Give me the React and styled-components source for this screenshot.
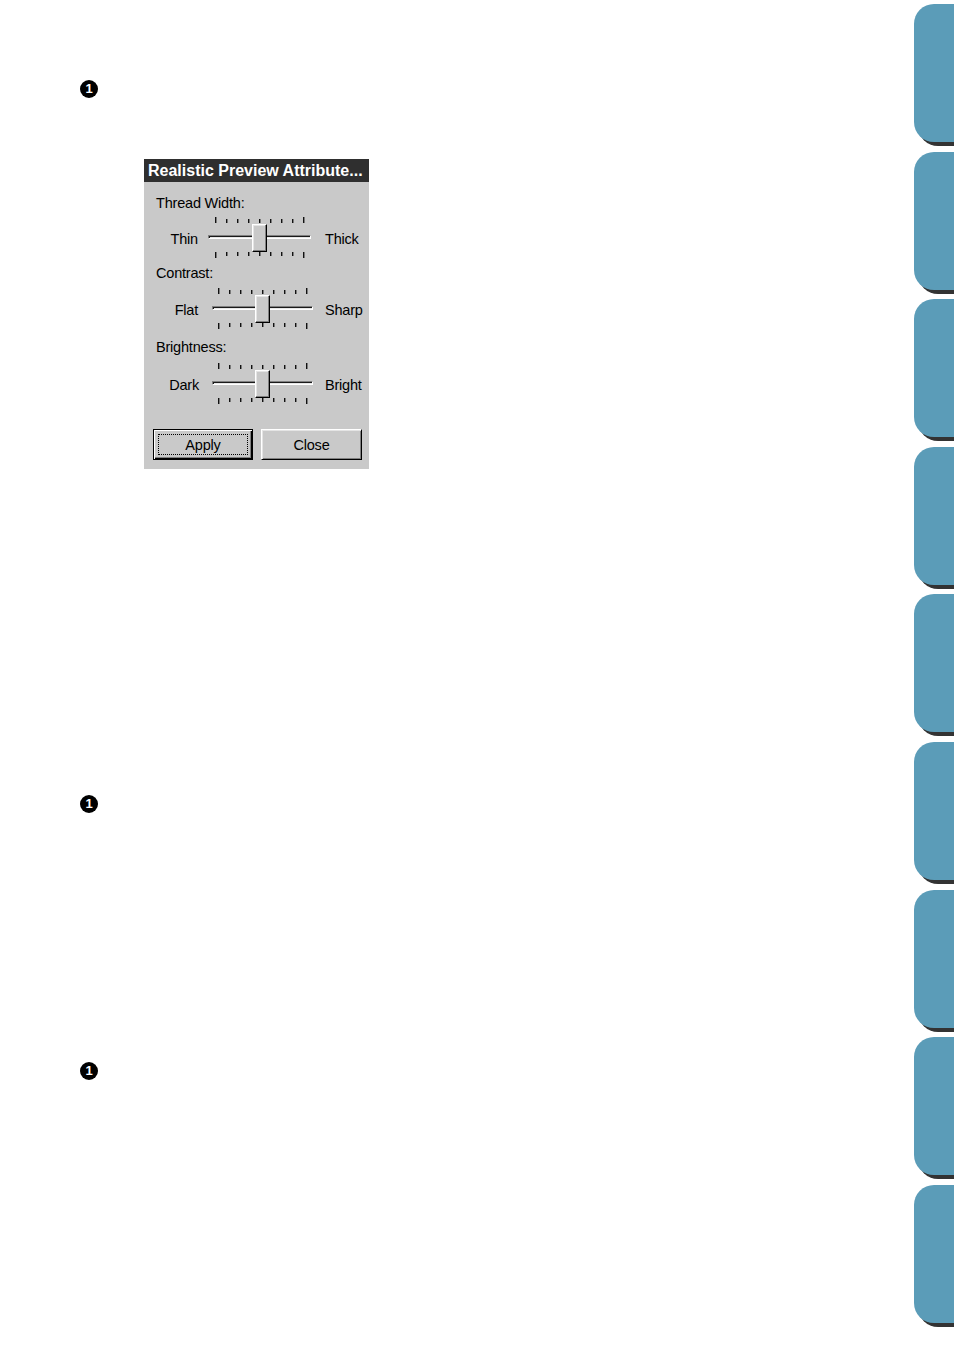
import styled, { createGlobalStyle } from 'styled-components';

const GlobalStyle = createGlobalStyle`
  html, body {
    margin: 0;
    padding: 0;
    background: #fff;
  }
  body {
    font-family: "Liberation Sans", Arial, sans-serif;
  }
`;

const Page = styled.div`
  display: flex;
  width: 954px;
  height: 1348px;
  overflow: hidden;
  background: #fff;
`;

const Main = styled.main`
  flex: 1;
  display: flex;
  flex-direction: column;
  align-items: flex-start;
  padding-left: 80px;
`;

const Marker = styled.div`
  width: 18px;
  height: 18px;
  margin-top: ${(p) => p.top}px;
  border-radius: 50%;
  background: #000;
  color: #fff;
  font: bold 13px/18px "Liberation Sans", Arial, sans-serif;
  text-align: center;
`;

const Dialog = styled.div`
  width: 225px;
  height: 310px;
  margin-top: 61px;
  margin-left: 64px;
  background: #c9c9c9;
  display: flex;
  flex-direction: column;
`;

const TitleBar = styled.div`
  height: 23px;
  background: #2f2f2f;
  color: #fff;
  font: bold 16px/23px "Liberation Sans", Arial, sans-serif;
  padding-left: 4px;
  white-space: nowrap;
  overflow: hidden;
`;

const Body = styled.div`
  display: flex;
  flex-direction: column;
  padding: 11px 0 0 0;
`;

const GroupLabel = styled.div`
  height: 20px;
  line-height: 20px;
  margin-top: ${(p) => p.gap || 0}px;
  padding-left: 12px;
  font-size: 14.5px;
  letter-spacing: -0.2px;
  color: #000;
`;

const SliderRow = styled.div`
  display: grid;
  grid-template-columns: ${(p) => p.trackLeft}px ${(p) => p.trackWidth}px 1fr;
  align-items: center;
  height: 42px;
  margin-top: ${(p) => p.gap}px;
  font-size: 14.5px;
  letter-spacing: -0.2px;
  color: #000;
`;

const SideLabel = styled.span`
  text-align: ${(p) => (p.right ? 'left' : 'right')};
  padding-left: ${(p) => (p.right ? p.pad : 0)}px;
  padding-right: ${(p) => (p.right ? 0 : p.pad)}px;
  margin-top: 2px;
`;

const Track = styled.div`
  position: relative;
  height: 42px;
`;

const Groove = styled.div`
  position: absolute;
  left: 0;
  right: 0;
  top: 18px;
  height: 2px;
  border-top: 1px solid #808080;
  border-left: 1px solid #808080;
  border-bottom: 1px solid #fff;
  border-right: 1px solid #fff;
  box-shadow: inset 1px 1px 0 #1a1a1a, inset -1px -1px 0 #e6e6e6;
`;

const Ticks = styled.div`
  position: absolute;
  left: ${(p) => p.left}px;
  width: 90px;
  top: ${(p) => (p.bottom ? 35 : 0)}px;
  height: 6px;
  display: flex;
  justify-content: space-between;
  align-items: ${(p) => (p.bottom ? 'flex-start' : 'flex-end')};
`;

const Tick = styled.i`
  display: block;
  width: 2px;
  height: ${(p) => (p.long ? 6 : 4)}px;
  background: linear-gradient(to right, #111 50%, #7a7a7a 50%);
`;

const Thumb = styled.div`
  position: absolute;
  top: 7px;
  width: 13px;
  height: 26px;
  background: #c9c9c9;
  border-top: 1px solid #fff;
  border-left: 1px solid #fff;
  border-right: 1px solid #000;
  border-bottom: 1px solid #000;
  box-shadow: inset -1px -1px 0 #808080, inset 1px 1px 0 #e4e4e4;
`;

const ButtonRow = styled.div`
  display: flex;
  gap: 8px;
  padding-left: 9px;
  margin-top: 24px;
`;

const Button = styled.div`
  box-sizing: border-box;
  width: ${(p) => p.w}px;
  height: 31px;
  display: flex;
  align-items: center;
  justify-content: center;
  font-size: 14.5px;
  letter-spacing: -0.2px;
  color: #000;
  background: #c9c9c9;
  border: 1px solid;
  border-color: ${(p) => (p.primary ? '#000' : '#fff #000 #000 #fff')};
  box-shadow: ${(p) =>
    p.primary
      ? 'inset 1px 1px 0 #fff, inset -1px -1px 0 #000, inset -2px -2px 0 #808080'
      : 'inset 1px 1px 0 #e4e4e4, inset -1px -1px 0 #808080'};
`;

const Focus = styled.span`
  box-sizing: border-box;
  width: calc(100% - 8px);
  height: calc(100% - 8px);
  border: 1px dotted #000;
  display: flex;
  align-items: center;
  justify-content: center;
  padding-top: 1px;
`;

const Tabs = styled.nav`
  width: 40px;
  display: flex;
  flex-direction: column;
  gap: 9.6px;
  padding-top: 4px;
`;

const Tab = styled.div`
  height: 138px;
  background: #5b9cb8;
  border-radius: 20px 0 0 20px;
  box-shadow: 4px 4px 0 #333;
`;

function Slider({ left, right, leftPad, rightPad, trackLeft, trackWidth, tickLeft, thumb, gap }) {
  const ticks = Array.from({ length: 9 }, (_, i) => i);
  return (
    <SliderRow trackLeft={trackLeft} trackWidth={trackWidth} gap={gap}>
      <SideLabel pad={leftPad}>{left}</SideLabel>
      <Track>
        <Ticks left={tickLeft}>
          {ticks.map((i) => (
            <Tick key={i} long={i === 0 || i === 8} />
          ))}
        </Ticks>
        <Groove />
        <Thumb style={{ left: thumb }} />
        <Ticks bottom left={tickLeft}>
          {ticks.map((i) => (
            <Tick key={i} long={i === 0 || i === 8} />
          ))}
        </Ticks>
      </Track>
      <SideLabel right pad={rightPad}>{right}</SideLabel>
    </SliderRow>
  );
}

export default function App() {
  return (
    <Page>
      <GlobalStyle />
      <Main>
        <Marker top={80}>1</Marker>
        <Dialog>
          <TitleBar>Realistic Preview Attribute...</TitleBar>
          <Body>
            <GroupLabel>Thread Width:</GroupLabel>
            <Slider
              left="Thin"
              right="Thick"
              leftPad={10}
              rightPad={14}
              trackLeft={64}
              trackWidth={103}
              tickLeft={7}
              thumb={44}
              gap={4}
            />
            <GroupLabel gap={4}>Contrast:</GroupLabel>
            <Slider
              left="Flat"
              right="Sharp"
              leftPad={14}
              rightPad={12}
              trackLeft={68}
              trackWidth={101}
              tickLeft={6}
              thumb={43}
              gap={5}
            />
            <GroupLabel gap={7}>Brightness:</GroupLabel>
            <Slider
              left="Dark"
              right="Bright"
              leftPad={13}
              rightPad={12}
              trackLeft={68}
              trackWidth={101}
              tickLeft={6}
              thumb={43}
              gap={6}
            />
            <ButtonRow>
              <Button primary w={100}>
                <Focus>Apply</Focus>
              </Button>
              <Button w={101}>Close</Button>
            </ButtonRow>
          </Body>
        </Dialog>
        <Marker top={326}>1</Marker>
        <Marker top={249}>1</Marker>
      </Main>
      <Tabs>
        {Array.from({ length: 9 }, (_, i) => (
          <Tab key={i} />
        ))}
      </Tabs>
    </Page>
  );
}
